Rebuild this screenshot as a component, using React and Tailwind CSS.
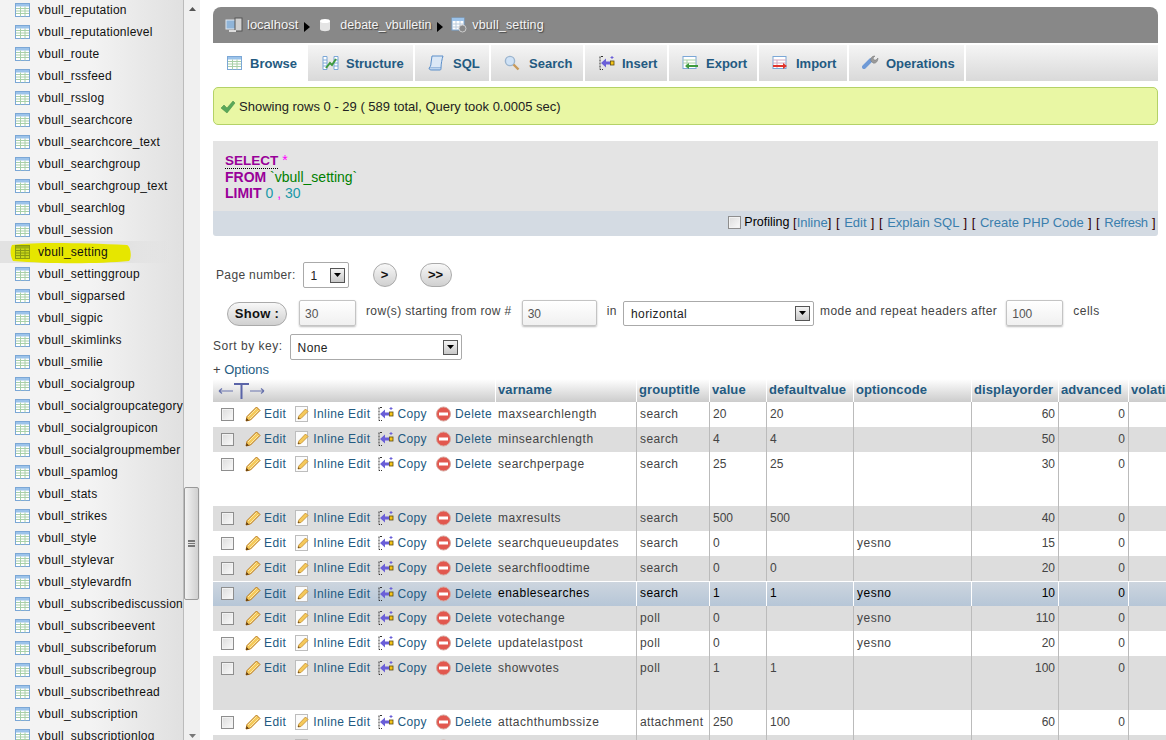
import React from "react";

const F = "font-['Liberation_Sans',Arial,sans-serif]";

const TableIcon = ({ dark }) => (
  <svg width="16" height="16" viewBox="0 0 16 16" className="shrink-0">
    <rect x="0.5" y="1.5" width="14" height="13" fill={dark ? "#c8d818" : "#fff"} stroke={dark ? "#8a9a10" : "#7ba7d6"} />
    <rect x="1" y="2" width="13" height="2.5" fill={dark ? "#9db010" : "#9cc3ea"} />
    <path d="M1 6.5h13M1 9h13M1 11.5h13M5.5 4.5v10M10 4.5v10" stroke={dark ? "#8a9a10" : "#a9d0a8"} strokeWidth="1" fill="none" />
  </svg>
);

const Pencil = () => (
  <svg width="16" height="16" viewBox="0 0 16 16" className="shrink-0">
    <path d="M1 15l1-4.5L11.5 1l3.5 3.5L5.5 14z" fill="#f5c95a" stroke="#b9781c" strokeWidth="1" />
    <path d="M3 11l8.5-8.5M5 13l8.5-8.5" stroke="#fbe9a8" strokeWidth="1" />
    <path d="M1 15l.6-3 2.4 2.4z" fill="#5b3a12" />
  </svg>
);

const InlineIcon = () => (
  <svg width="16" height="16" viewBox="0 0 16 16" className="shrink-0">
    <rect x="1.5" y="0.5" width="12" height="15" fill="#fbfbfb" stroke="#bdbdbd" />
    <path d="M4 13l.8-3L11.5 3l2.5 2.5L7 12.5z" fill="#f5c95a" stroke="#c08a2c" strokeWidth="0.8" />
    <path d="M4 13l.5-1.8 1.3 1.3z" fill="#5b3a12" />
  </svg>
);

const CopyIcon = () => (
  <svg width="16" height="16" viewBox="0 0 16 16" className="shrink-0">
    <path d="M4 1.5H1v13h3" stroke="#333" fill="none" strokeDasharray="2 1" />
    <path d="M2 8l5-4.5v3h4v3H7v3z" fill="#6a5fd8" />
    <rect x="11.5" y="6" width="3.5" height="4" fill="#f5c518" stroke="#5a4a10" strokeWidth="0.8" />
    <path d="M13 1v3M11.5 2.5h3" stroke="#6a5fd8" strokeWidth="1" />
  </svg>
);

const DeleteIcon = () => (
  <svg width="16" height="16" viewBox="0 0 16 16" className="shrink-0">
    <circle cx="7.5" cy="8" r="7" fill="#e2584f" stroke="#d6a8a0" />
    <rect x="3" y="6.5" width="9" height="3" fill="#fff" />
  </svg>
);

const Checkbox = () => (
  <span className="block w-[13px] h-[13px] border border-[#8e8e8e] bg-gradient-to-br from-[#dcdcdc] to-[#fafafa] shadow-[inset_0_0_0_1px_#f2f2f2] shrink-0" />
);

const Arrow = () => (
  <span className="flex h-[15px] w-[15px] items-center justify-center border border-[#555] bg-gradient-to-b from-[#f4f4f4] to-[#c8c8c8] shrink-0">
    <svg width="7" height="4" viewBox="0 0 7 4"><path d="M0 0h7L3.5 4z" fill="#000" /></svg>
  </span>
);

const SelectBox = ({ value, className }) => (
  <div className={`flex items-center justify-between rounded-[2px] border border-[#aaa] bg-white pl-[7px] pr-[3px] text-[12px] text-[#222] ${className}`}>
    <span className="pt-[1px] tracking-[0.4px]">{value}</span>
    <Arrow />
  </div>
);

const TextBox = ({ value, className }) => (
  <div className={`flex items-center rounded-[2px] border border-[#c4c4c4] bg-gradient-to-b from-[#fff] to-[#f0f0f0] pl-[5px] pt-[1px] text-[12px] text-[#555] shadow-[0_1px_2px_#bbb] ${className}`}>
    {value}
  </div>
);

const Pill = ({ children, className }) => (
  <div className={`flex items-center justify-center rounded-full border border-[#aaa] bg-gradient-to-b from-[#f8f8f8] to-[#d0d0d0] text-[13px] font-bold text-[#111] ${className}`}>
    {children}
  </div>
);

const names = ["reputation","reputationlevel","route","rssfeed","rsslog","searchcore","searchcore_text","searchgroup","searchgroup_text","searchlog","session","setting","settinggroup","sigparsed","sigpic","skimlinks","smilie","socialgroup","socialgroupcategory","socialgroupicon","socialgroupmember","spamlog","stats","strikes","style","stylevar","stylevardfn","subscribediscussion","subscribeevent","subscribeforum","subscribegroup","subscribethread","subscription","subscriptionlog"];

const Sidebar = () => (
  <div className="relative h-[740px] w-[184px] shrink-0 overflow-hidden border-r border-[#bbb] bg-gradient-to-r from-[#f3f3f3] from-50% to-[#e0e0e0]">
    <div className="-mt-[1px]">
      {names.map((n) => {
        const hl = n === "setting";
        return (
          <div key={n} className={`relative flex h-[22px] items-center whitespace-nowrap pl-[15px] text-[12px] text-[#111] ${hl ? "bg-gradient-to-r from-[#e2e2e2] from-70% to-transparent" : ""}`}>
            {hl && (
              <svg width="125" height="24" viewBox="0 0 125 24" className="absolute left-[9px] top-0">
                <path d="M3 4C30 1 70 2 118 4c4 2 5 13 2 16-30 3-80 3-116 0C1 15 1 8 3 4z" fill="#e6e600" />
              </svg>
            )}
            <span className="relative flex items-center">
              <TableIcon dark={hl} />
              <span className="ml-[7px] tracking-[0.25px]">vbull_{n}</span>
            </span>
          </div>
        );
      })}
    </div>
  </div>
);

const Scrollbar = () => (
  <div className="relative h-[740px] w-[16px] shrink-0 bg-[#f0f0f0]">
    <div className="flex h-[18px] items-center justify-center">
      <svg width="7" height="4" viewBox="0 0 7 4"><path d="M0 4h7L3.5 0z" fill="#555" /></svg>
    </div>
    <div className="absolute left-0 top-[487px] flex h-[113px] w-[15px] items-center justify-center rounded-[2px] border border-[#999] bg-gradient-to-r from-[#f2f2f2] to-[#d0d0d0]">
      <div className="h-[7px] w-[7px] border-y border-[#777] bg-[linear-gradient(#777_1px,transparent_1px)] bg-[length:100%_2px]" />
    </div>
    <div className="absolute bottom-[2px] left-0 flex w-full justify-center">
      <svg width="7" height="4" viewBox="0 0 7 4"><path d="M0 0h7L3.5 4z" fill="#777" /></svg>
    </div>
  </div>
);

const Sep = () => (
  <svg width="6" height="10" viewBox="0 0 6 10" className="mt-[3px] mx-[6px]"><path d="M0 0l6 5-6 5z" fill="#000" /></svg>
);

const Breadcrumb = () => (
  <div className="flex h-[36px] items-center rounded-t-[8px] bg-[#888] pl-[12px] text-[12.5px] text-[#f4f4f4] [text-shadow:1px_1px_1px_#444]">
    <svg width="18" height="16" viewBox="0 0 18 16" className="mr-[4px]">
      <rect x="1" y="3" width="12" height="9" fill="#8fb4d8" stroke="#dfe6ee" />
      <rect x="10" y="1" width="7" height="13" fill="#d0d0d0" stroke="#555" />
      <path d="M4 14h7" stroke="#ddd" strokeWidth="2" />
    </svg>
    <span className="text-[13px]">localhost</span>
    <Sep />
    <svg width="14" height="14" viewBox="0 0 14 14" className="ml-[2px] mr-[8px]">
      <path d="M2 3v8c0 3 10 3 10 0V3z" fill="#e4e4e4" />
      <ellipse cx="7" cy="3" rx="5" ry="2" fill="#fff" />
    </svg>
    <span>debate_vbulletin</span>
    <Sep />
    <svg width="16" height="16" viewBox="0 0 16 16" className="ml-[2px] mr-[5px]">
      <rect x="1" y="1" width="12" height="12" fill="#fff" stroke="#7ba7d6" />
      <rect x="1" y="1" width="12" height="3" fill="#9cc3ea" />
      <path d="M1 7h12M1 10h12M5 4v9M9 4v9" stroke="#bcd" />
      <circle cx="11.5" cy="11.5" r="3.5" fill="#888" stroke="#ccc" />
    </svg>
    <span className="tracking-[0.15px]">vbull_setting</span>
  </div>
);

const tabIcons = {
  Structure: (
    <svg width="17" height="16" viewBox="0 0 17 16"><path d="M1 1.5h4v13H1zM12 1.5h4v13h-4z" fill="#fff" stroke="#7ba7d6" /><path d="M1 5h4M1 8h4M1 11h4M12 5h4M12 8h4M12 11h4" stroke="#7ba7d6" /><path d="M4 13l4-5 2 2 4-6" stroke="#3e9a3e" strokeWidth="2" fill="none" /></svg>
  ),
  SQL: (
    <svg width="16" height="16" viewBox="0 0 16 16"><path d="M4 1h11c-1 3-2 8-2 12H1c1-1 2-2 2-5z" fill="#dbe8f6" stroke="#5c8fc9" /><path d="M1 13c0 2 2 2 3 2h8c1 0 1-1 1-2" fill="#bcd4ee" stroke="#5c8fc9" /></svg>
  ),
  Search: (
    <svg width="16" height="16" viewBox="0 0 16 16"><circle cx="6" cy="6" r="4.6" fill="#cfe2f6" stroke="#9cb5cf" strokeWidth="1.4" /><path d="M9.5 9.5l5 5" stroke="#c89a5a" strokeWidth="2.4" /></svg>
  ),
  Insert: <CopyIcon />,
  Export: (
    <svg width="16" height="16" viewBox="0 0 16 16"><rect x="1" y="1.5" width="13" height="12" fill="#fff" stroke="#7ba7d6" /><path d="M1 5h13M1 8h13M5 5v8" stroke="#a9d0a8" /><path d="M16 10H7V8l-4 3 4 3v-2h9z" fill="#3e9a3e" /></svg>
  ),
  Import: (
    <svg width="16" height="16" viewBox="0 0 16 16"><rect x="1" y="1.5" width="13" height="12" fill="#fff" stroke="#7ba7d6" /><path d="M1 5h13M1 8h13M5 5v8" stroke="#d0a8c0" /><path d="M1 10h10V8l4 3-4 3v-2H1z" fill="#e0342c" /></svg>
  ),
  Operations: (
    <svg width="17" height="16" viewBox="0 0 17 16"><path d="M2 12l7-7" stroke="#6f9ad6" strokeWidth="4" strokeLinecap="round" /><path d="M9 6c-1-3 1-5 4-5l-2 2 1 2 2 0 2-2c0 3-2 6-5 5z" fill="#9a9a9a" stroke="#777" strokeWidth="0.5" /></svg>
  ),
};

const tabs = [
  ["Browse", "w-[95px] pl-[14px]", "ml-[7px]"],
  ["Structure", "w-[107px] pl-[14px]", "ml-[7px]"],
  ["SQL", "w-[76px] pl-[13px]", "ml-[9px]"],
  ["Search", "w-[94px] pl-[13px]", "ml-[9px]"],
  ["Insert", "w-[84px] pl-[14px]", "ml-[7px]"],
  ["Export", "w-[90px] pl-[13px]", "ml-[8px]"],
  ["Import", "w-[90px] pl-[13px]", "ml-[8px]"],
  ["Operations", "w-[117px] pl-[13px]", "ml-[7px]"],
];

const Tabs = () => (
  <div className="mt-[2px] flex h-[36px] bg-gradient-to-b from-[#f5f5f5] to-[#d9d9d9]">
    {tabs.map(([t, w, ml], i) => (
      <div key={t} className={`flex items-center border-r-2 border-white text-[13px] font-bold text-[#235a81] ${w} ${i === 0 ? "bg-white" : "bg-gradient-to-b from-[#f5f5f5] to-[#d9d9d9]"}`}>
        {i === 0 ? <TableIcon /> : tabIcons[t]}
        <span className={`${ml} pt-[1px]`}>{t}</span>
      </div>
    ))}
  </div>
);

const Gap = ({ children }) => <span className="tracking-[0.5px]">{children}</span>;

const Sql = () => (
  <div className="mt-[16px] overflow-hidden rounded-b-[3px]">
    <div className="h-[70px] bg-[#e4e4e4] pl-[12px] pt-[11px] text-[14px] leading-[16px]">
      <div>
        <b className="border-b border-dotted border-black text-[13.5px] text-[#990099]">SELECT</b>
        <span className="text-[#ff00ff]"> *</span>
      </div>
      <div>
        <b className="text-[#990099]">FROM</b> <span className="text-[#008000]">`vbull_setting`</span>
      </div>
      <div>
        <b className="text-[#990099]">LIMIT</b> <span className="text-[#1a98a8]">0</span> <span className="text-[#ff00ff]">,</span> <span className="text-[#1a98a8]">30</span>
      </div>
    </div>
    <div className="flex h-[25px] items-center justify-end whitespace-pre bg-[#d4dbe3] pb-[2px] pr-[2px] text-[13px] text-[#300]">
      <Checkbox />
      <span className="ml-[3px] text-[12.5px] text-black">Profiling </span>
      <span>[</span><span className="text-[#3a7ead]">Inline</span><Gap>] [ </Gap>
      <span className="text-[#3a7ead]">Edit</span><Gap> ] [ </Gap>
      <span className="text-[#3a7ead]">Explain SQL</span><Gap> ] [ </Gap>
      <span className="text-[#3a7ead]">Create PHP Code</span><Gap> ] [ </Gap>
      <span className="tracking-[-0.3px] text-[#3a7ead]">Refresh</span><Gap> ]</Gap>
    </div>
  </div>
);

const Nav = () => (
  <div className="text-[12px] text-[#444]">
    <div className="mt-[26px] flex h-[26px] items-center">
      <span className="ml-[3px] tracking-[0.35px]">Page number:</span>
      <SelectBox value="1" className="ml-[7px] h-[26px] w-[46px]" />
      <Pill className="ml-[24px] h-[24px] w-[24px]">&gt;</Pill>
      <Pill className="ml-[23px] h-[24px] w-[32px]">&gt;&gt;</Pill>
    </div>
    <div className="mt-[12px] flex h-[26px] items-center">
      <Pill className="ml-[14px] mt-[1px] h-[24px] w-[60px] tracking-[0.3px]">Show :</Pill>
      <TextBox value="30" className="ml-[12px] h-[26px] w-[57px]" />
      <span className="ml-[10px] -mt-[5px] tracking-[0.37px]">row(s) starting from row #</span>
      <TextBox value="30" className="ml-[10px] h-[26px] w-[75px]" />
      <span className="ml-[10px] -mt-[5px] tracking-[0.5px]">in</span>
      <SelectBox value="horizontal" className="ml-[6px] h-[25px] w-[191px]" />
      <span className="ml-[6px] -mt-[5px] tracking-[0.43px]">mode and repeat headers after</span>
      <TextBox value="100" className="ml-[9px] h-[26px] w-[57px]" />
      <span className="ml-[10px] -mt-[5px] tracking-[0.5px]">cells</span>
    </div>
    <div className="mt-[8px] flex h-[26px] items-center">
      <span className="-mt-[2px] tracking-[0.52px]">Sort by key:</span>
      <SelectBox value="None" className="ml-[7px] h-[26px] w-[172px]" />
    </div>
    <div className="mt-[1px] h-[18px] text-[13px] leading-[18px]">+ <span className="text-[#235a81]">Options</span></div>
  </div>
);

const rows = [
  ["maxsearchlength","search","20","20","","60",25],
  ["minsearchlength","search","4","4","","50",25],
  ["searchperpage","search","25","25","","30",54],
  ["maxresults","search","500","500","","40",25],
  ["searchqueueupdates","search","0","","yesno","15",25],
  ["searchfloodtime","search","0","0","","20",25],
  ["enablesearches","search","1","1","yesno","10",25],
  ["votechange","poll","0","","yesno","110",25],
  ["updatelastpost","poll","0","","yesno","20",25],
  ["showvotes","poll","1","1","","100",54],
  ["attachthumbssize","attachment","250","100","","60",25],
  ["attachthumbwidth","attachment","","","","",25],
];

const Act = ({ icon, label, cls }) => (
  <span className={`flex items-center text-[#235a81] ${cls}`}>
    {icon}
    <span className="ml-[3px] tracking-[0.4px]">{label}</span>
  </span>
);

const headers = ["varname","grouptitle","value","defaultvalue","optioncode","displayorder","advanced","volatile"];

const ResultTable = () => (
  <table className="mt-0 w-[1000px] table-fixed border-separate border-spacing-0 text-[12px] text-[#444]">
    <colgroup>
      <col className="w-[283px]" />
      <col className="w-[141px]" />
      <col className="w-[73px]" />
      <col className="w-[57px]" />
      <col className="w-[87px]" />
      <col className="w-[118px]" />
      <col className="w-[87px]" />
      <col className="w-[70px]" />
      <col className="w-[84px]" />
    </colgroup>
    <thead>
      <tr className="h-[23px] bg-gradient-to-b from-[#ffffff] to-[#cccccc]">
        <th className="border-r border-white p-0 text-left align-middle">
          <svg width="50" height="18" viewBox="0 0 50 18" className="ml-[4px]">
            <path d="M2 9h14M2 9l3-2.5M2 9l3 2.5M33 9h14M47 9l-3-2.5M47 9l-3 2.5" stroke="#6a74ad" strokeWidth="1.2" fill="none" />
            <path d="M17 2h15M24.5 2v15" stroke="#5a64a8" strokeWidth="2" />
          </svg>
        </th>
        {headers.map((h) => (
          <th key={h} className="overflow-hidden whitespace-nowrap border-r border-white pb-[2px] pl-[2px] text-left align-middle text-[13px] font-bold tracking-[0.1px] text-[#235a81]">
            {h}
          </th>
        ))}
      </tr>
    </thead>
    <tbody>
      {rows.map((r, i) => {
        const hl = r[0] === "enablesearches";
        const bg = hl ? "bg-gradient-to-b from-[#ced6df] to-[#b6c6d7] text-[#000]" : i % 2 === 0 ? "bg-white" : "bg-[#dddddd]";
        const h = r[6] === 54 ? "h-[54px]" : "h-[25px]";
        const b = hl ? "border-t border-white" : "";
        const td = `align-top whitespace-nowrap overflow-hidden p-0 ${hl ? "pt-[2px]" : "pt-[3px]"} ${b}`;
        const v = "border-r border-[#bbb]";
        return (
          <tr key={r[0]} className={`${bg} ${h}`}>
            <td className={`${b} align-top p-0`}>
              <div className={`flex items-center pl-[8px] ${hl ? "h-[23px]" : "h-[24px]"}`}>
                <Checkbox />
                <Act icon={<Pencil />} label="Edit" cls="ml-[11px]" />
                <Act icon={<InlineIcon />} label="Inline Edit" cls="ml-[8px]" />
                <Act icon={<CopyIcon />} label="Copy" cls="ml-[8px]" />
                <Act icon={<DeleteIcon />} label="Delete" cls="ml-[9px]" />
              </div>
            </td>
            <td className={`${td} ${v} pl-[2px] tracking-[0.5px]`}>{r[0]}</td>
            <td className={`${td} ${v} pl-[3px] tracking-[0.4px]`}>{r[1]}</td>
            <td className={`${td} ${v} pl-[3px]`}>{r[2]}</td>
            <td className={`${td} ${v} pl-[3px]`}>{r[3]}</td>
            <td className={`${td} ${v} pl-[3px] tracking-[0.5px]`}>{r[4]}</td>
            <td className={`${td} ${v} pr-[3px] text-right`}>{r[5]}</td>
            <td className={`${td} ${v} pr-[3px] text-right`}>{i < 11 ? "0" : ""}</td>
            <td className={td}></td>
          </tr>
        );
      })}
    </tbody>
  </table>
);

export default function App() {
  return (
    <div className={`flex h-[740px] w-[1166px] overflow-hidden bg-white ${F}`}>
      <Sidebar />
      <Scrollbar />
      <main className="min-w-0 flex-1 overflow-hidden pl-[13px] pt-[7px]">
        <div className="w-[945px]">
          <Breadcrumb />
          <Tabs />
          <div className="mt-[6px] flex h-[38px] items-center rounded-[5px] border border-[#b4d267] bg-[#e9f7a4] pl-[6px] pt-[1px] text-[13px] text-[#222]">
            <svg width="16" height="14" viewBox="0 0 16 14"><path d="M1 8l3-3 3 3 6-7 2 2-8 10z" fill="#5aa85a" stroke="#3e8a3e" strokeWidth="0.5" /></svg>
            <span className="ml-[3px]">Showing rows 0 - 29 ( 589 total, Query took 0.0005 sec)</span>
          </div>
          <Sql />
          <Nav />
        </div>
        <ResultTable />
      </main>
    </div>
  );
}
